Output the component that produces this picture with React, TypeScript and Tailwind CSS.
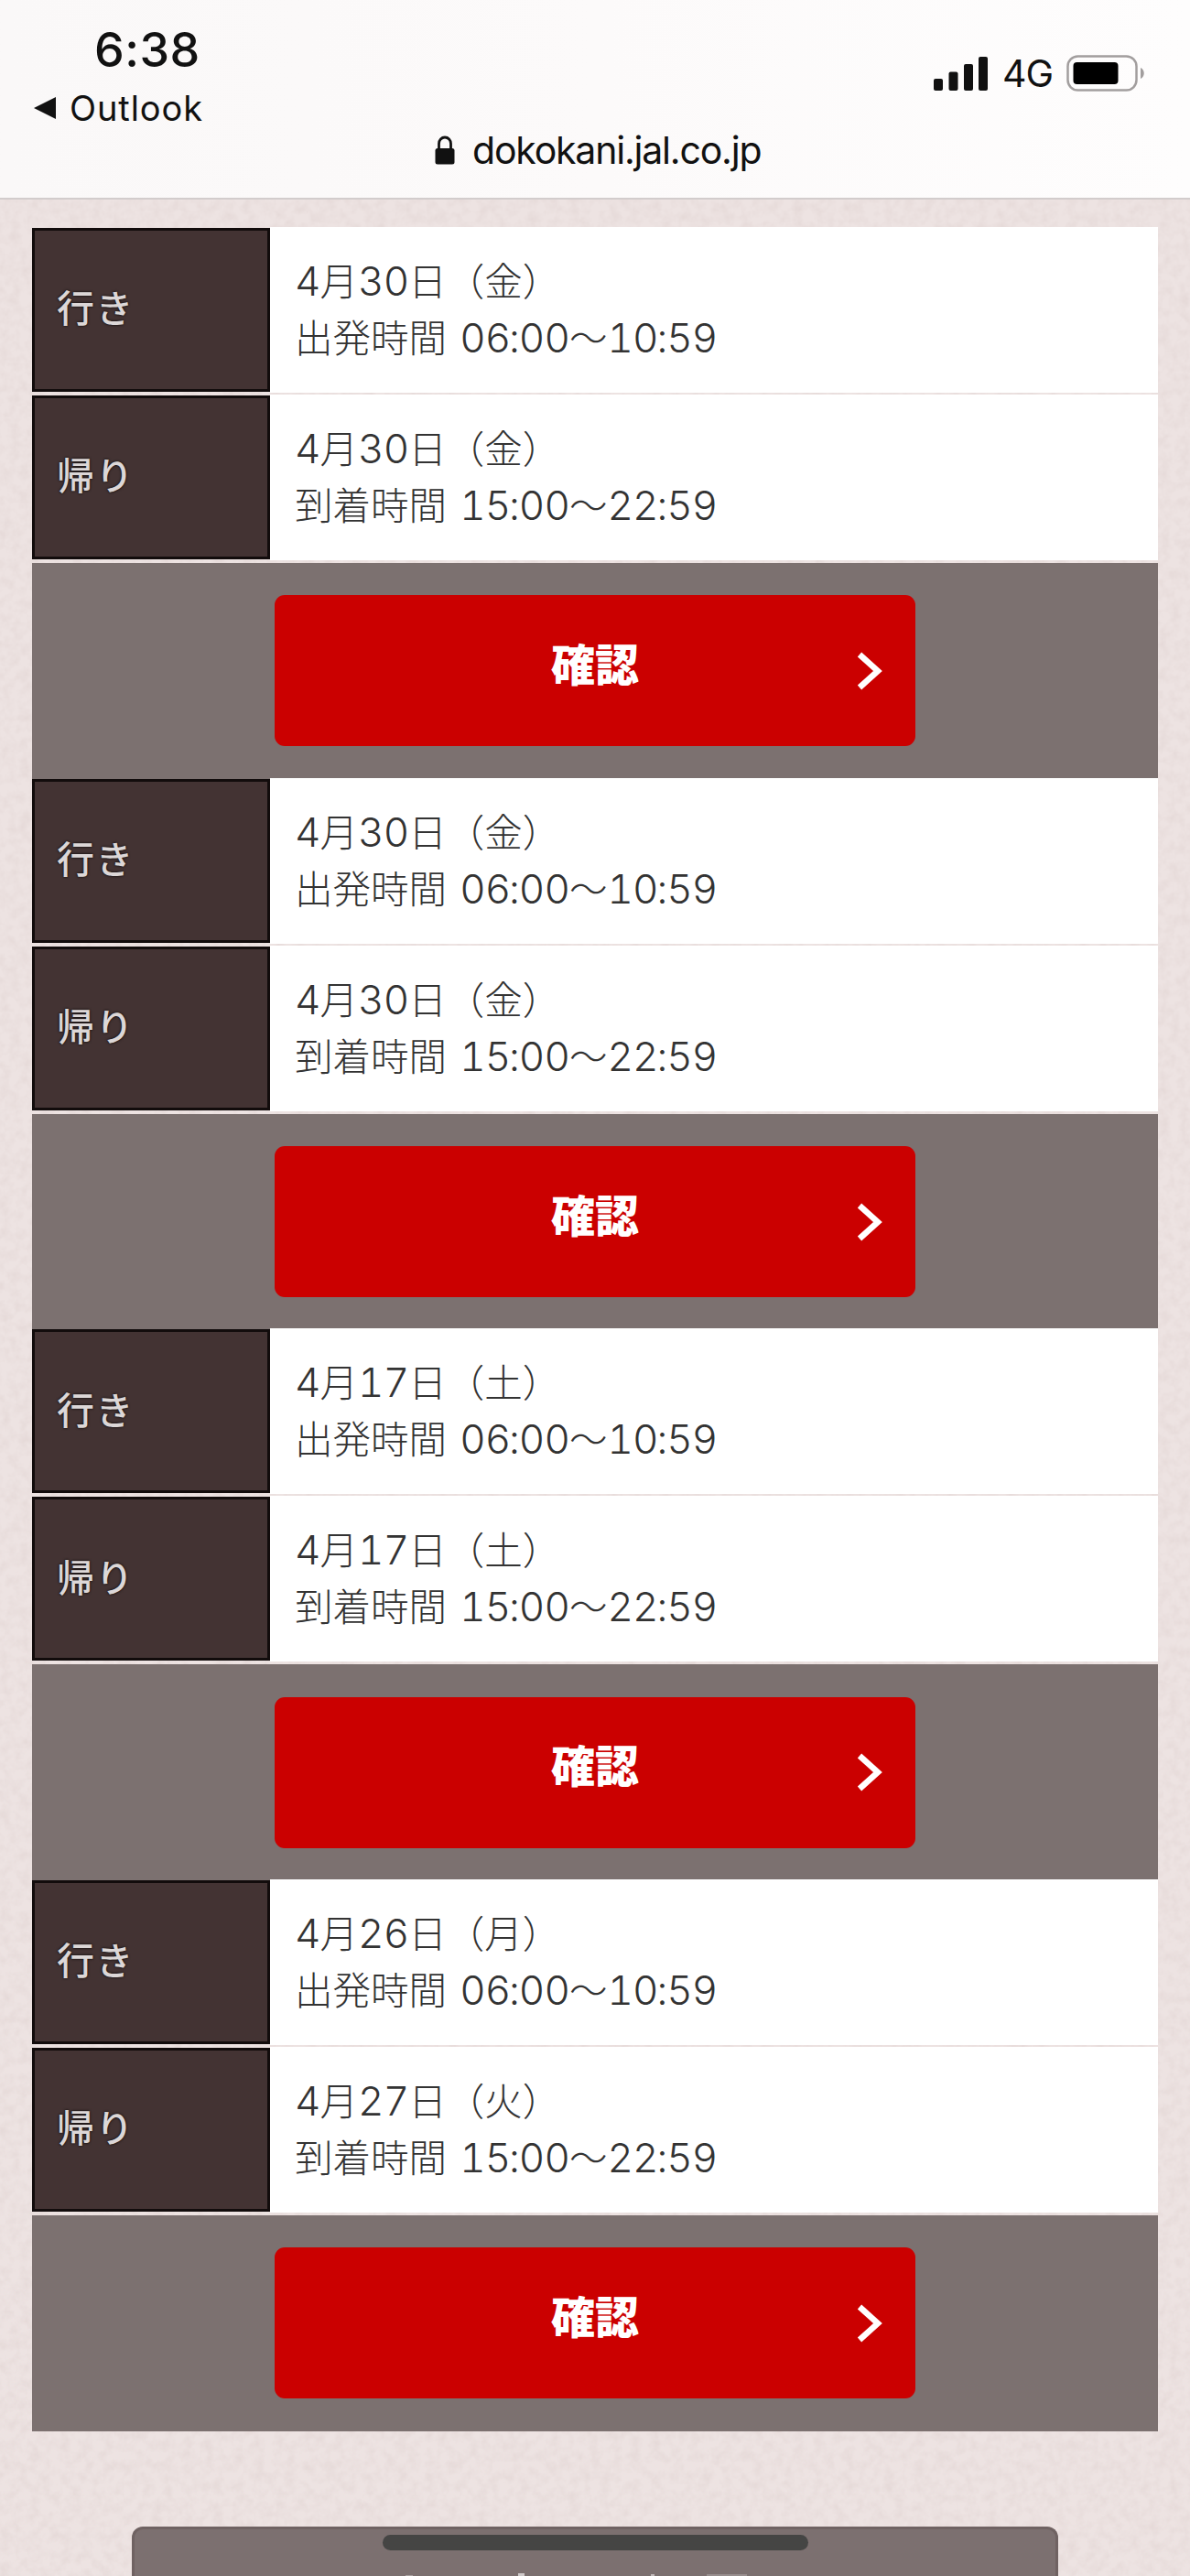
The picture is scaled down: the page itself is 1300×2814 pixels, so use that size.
import React from 'react';

interface Leg {
  label: string;
  date: string;
  kind: string;
  time: string;
}

const OUTBOUND = { label: '行き', kind: '出発時間', time: '06:00〜10:59' };
const INBOUND = { label: '帰り', kind: '到着時間', time: '15:00〜22:59' };

const plans: Leg[][] = [
  [{ ...OUTBOUND, date: '4月30日（金）' }, { ...INBOUND, date: '4月30日（金）' }],
  [{ ...OUTBOUND, date: '4月30日（金）' }, { ...INBOUND, date: '4月30日（金）' }],
  [{ ...OUTBOUND, date: '4月17日（土）' }, { ...INBOUND, date: '4月17日（土）' }],
  [{ ...OUTBOUND, date: '4月26日（月）' }, { ...INBOUND, date: '4月27日（火）' }],
];

// Digits are set slightly larger than the kanji around them
const MixedText = ({ text }: { text: string }) => (
  <>
    {text.split(/([0-9]+|:)/).map((part, i) => {
      if (/[0-9]/.test(part)) {
        return <span key={i} className="font-[Inter] text-[44px] font-light tracking-[-0.9px] tabular-nums">{part}</span>;
      }
      if (part === ':') {
        return <span key={i} className="inline-block w-[9.500px] text-center font-[Inter] text-[44px] leading-none font-light"><span className="-mx-1">:</span></span>;
      }
      return <span key={i}>{part}</span>;
    })}
  </>
);

const PaperTexture = () => (
  <svg className="absolute inset-0 h-full w-full" aria-hidden="true">
    <filter id="paper" x="0" y="0" width="100%" height="100%">
      <feTurbulence type="fractalNoise" baseFrequency="0.09" numOctaves="3" seed="4" />
      <feColorMatrix values="0 0 0 0 0.78  0 0 0 0 0.69  0 0 0 0 0.68  1.6 0 0 0 -0.58" />
    </filter>
    <rect width="100%" height="100%" filter="url(#paper)" />
  </svg>
);

const StatusBar = () => (
  <header className="relative flex h-[218px] shrink-0 flex-col border-b-2 border-[#d2cccc] bg-linear-to-r from-[#faf8f8] via-[#fcfafa] to-[#fefdfd] font-[Inter,'Liberation_Sans',sans-serif] text-[#111]">
    <div className="flex h-[142px] shrink-0 justify-between">
      <div className="pl-9">
        <div className="mt-[23px] pl-[67px] text-[52px] leading-[64px] font-medium tracking-[0.5px]">6:38</div>
        <div className="mt-[7px] flex items-center text-[38px] leading-[48px] tracking-[0.9px]">
          <svg width="26" height="24" viewBox="0 0 26 24" className="mr-[14px]">
            <path d="M1 12 25 0v24Z" fill="#111" />
          </svg>
          Outlook
        </div>
      </div>
      <div className="mt-[59px] flex h-[42px] items-center pr-[48px]">
        <svg width="60" height="38" viewBox="0 0 60 38" fill="#111">
          <rect x="0" y="25" width="10" height="13" rx="2" />
          <rect x="16.5" y="17.500" width="10" height="20.500" rx="2" />
          <rect x="33" y="9" width="10" height="29" rx="2" />
          <rect x="49" y="1" width="10" height="37" rx="2" />
        </svg>
        <span className="ml-[15px] w-[56px] pt-px text-[41px] leading-none tracking-[-1px]">4G</span>
        <svg width="87" height="40" viewBox="0 0 87 40" className="ml-[14px]">
          <rect x="1.500" y="1.500" width="75" height="37" rx="11" fill="none" stroke="#a29e9e" strokeWidth="2.500" />
          <rect x="7.500" y="8" width="49" height="24" rx="4" fill="#000" />
          <path d="M81 14c5 2 5 10 0 12Z" fill="#a29e9e" />
        </svg>
      </div>
    </div>
    <div className="flex h-[44px] items-center pl-[475px] text-[41px] leading-none tracking-[-1.2px]">
      <svg width="22" height="32" viewBox="0 0 22 32" className="mr-[19px]">
        <path d="M4.500 15V9a6.500 7 0 0 1 13 0v6" fill="none" stroke="#111" strokeWidth="2.800" />
        <rect x="0.500" y="14" width="21" height="17.500" rx="2.500" fill="#111" />
      </svg>
      dokokani.jal.co.jp
    </div>
  </header>
);

const LegRow = ({ leg }: { leg: Leg }) => (
  <div className="flex h-[179px]">
    <div className="flex w-[260px] items-center border-[3px] border-[#120c0c] bg-[#433333] pb-[7px] pl-[24px] text-[41px] font-medium tracking-[1.5px] text-[#dcd7d7] [text-shadow:0_0_3px_#000]">
      {leg.label}
    </div>
    <div className="-my-px flex flex-1 flex-col justify-center bg-white pb-[5px] pl-[27px] text-[41.5px] leading-[62px] font-light text-[#333]">
      <div className="h-[62px] whitespace-nowrap"><MixedText text={leg.date} /></div>
      <div className="h-[62px] whitespace-nowrap [word-spacing:5px]"><MixedText text={`${leg.kind} ${leg.time}`} /></div>
    </div>
  </div>
);

const PlanCard = ({ legs }: { legs: Leg[] }) => (
  <section className="flex h-[601.700px] flex-col">
    <div className="flex flex-col gap-[4px] pb-[4px]">
      {legs.map((leg) => (
        <LegRow key={leg.label} leg={leg} />
      ))}
    </div>
    <div className="flex flex-1 items-center justify-center bg-[#7c7170]">
      <button className="grid h-[165px] w-[700px] grid-cols-[1fr_auto_1fr] items-center rounded-[11px] bg-[#cb0000] text-white">
        <span />
        <span className="pb-[20px] text-[48px] leading-none font-black">確認</span>
        <svg width="30" height="44" viewBox="0 0 30 44" className="mr-[35px] justify-self-end">
          <path d="M4 4 24 22 4 40" fill="none" stroke="#fff" strokeWidth="6.500" />
        </svg>
      </button>
    </div>
  </section>
);

export default function App() {
  return (
    <div className="relative flex h-[2814px] w-[1300px] flex-col overflow-hidden bg-[#ede3e2] font-['Noto_Sans_CJK_JP',sans-serif]">
      <PaperTexture />
      <StatusBar />
      <main className="relative mt-[31px] shrink-0 pr-[35px] pl-[35px]">
        {plans.map((legs, i) => (
          <PlanCard key={i} legs={legs} />
        ))}
      </main>
      <div className="relative mt-[104px] ml-[144px] flex h-[54px] w-[1012px] shrink-0 items-end rounded-t-[12px] border-[3px] border-b-0 border-[#6f6262] bg-[#7c7070]">
        {/* upper edges of the label, cut off by the viewport */}
        <div className="ml-[296px] h-px w-[8px] bg-[#a89f9f]" />
        <div className="ml-[115px] h-[3px] w-[7px] bg-[#cfcaca]" />
        <div className="ml-[138px] h-[2px] w-[4px] bg-[#c0b9b9]" />
        <div className="ml-[57px] h-[2px] w-[44px] bg-[#988e8e]" />
      </div>
      {/* home indicator */}
      <div className="absolute bottom-[28px] left-[418px] h-[17px] w-[465px] rounded-full bg-[#454544]" />
    </div>
  );
}
